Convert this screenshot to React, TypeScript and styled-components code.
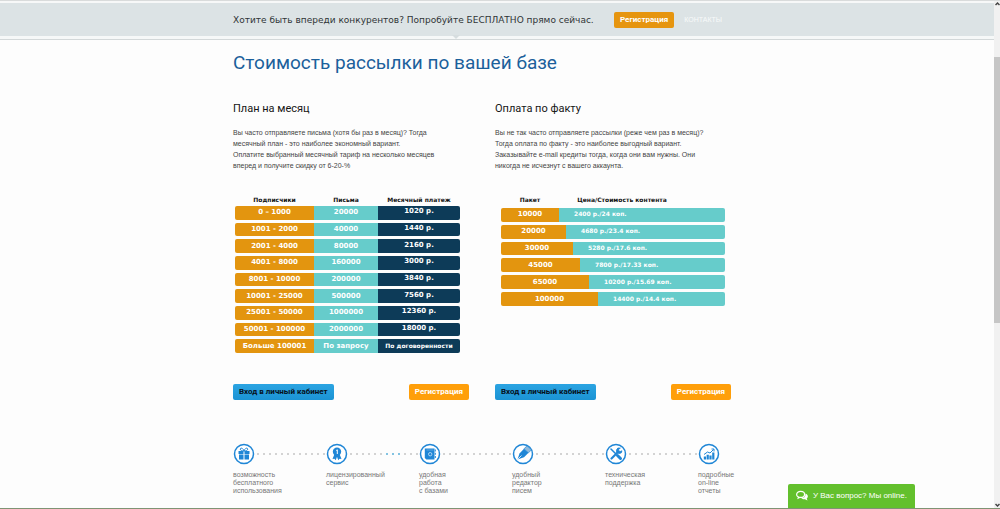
import React from "react";
import styled, { createGlobalStyle } from "styled-components";

const Global = createGlobalStyle`
  * { box-sizing: border-box; }
  html, body, #root { height: 100%; }
  body { margin: 0; background: #fdfdfd; font-family: "Liberation Sans", Arial, sans-serif; overflow: hidden; }
  h1, h2, p, ul { margin: 0; padding: 0; }
`;

const Shell = styled.div`
  display: flex;
  min-height: 100vh;
  border-top: 1px solid #d9dbdb;
  border-bottom: 1px solid #7f9474;
`;
const Page = styled.div`
  flex: 1;
  min-width: 0;
`;
const Container = styled.div`
  width: 100%;
  max-width: 528px;
  margin: 0 auto;
`;

const TopBar = styled.header`
  position: relative;
  border-top: 2px solid #f7f8f8;
  border-bottom: 1px solid #d3d8d9;
  background: #f6f8f8;
  padding-bottom: 3px;
`;
const TopBand = styled.div`
  background: #dce3e5;
`;
const TopRow = styled(Container)`
  display: flex;
  align-items: center;
  height: 33px;
  gap: 10px;
  white-space: nowrap;
`;
const Promo = styled.p`
  flex: 0 0 371px;
  font: 9px/12px "DejaVu Sans", Verdana, sans-serif;
  color: #2f3436;
`;
const NavLink = styled.a`
  font-size: 7px;
  line-height: 12px;
  color: #f8fafa;
  text-decoration: none;
`;
const Notch = styled.span`
  position: absolute;
  left: calc(50% - 45px);
  bottom: 0;
  border: 4px solid transparent;
  border-top-color: #d6dddf;
  border-bottom: 0;
`;

const Button = styled.button<{ $tone: "amber" | "orange" | "blue" }>`
  height: 16px;
  padding: 0 6px;
  border: 0;
  border-radius: 2px;
  font: 700 8px/16px Roboto, sans-serif;
  white-space: nowrap;
  color: ${(p) => (p.$tone === "blue" ? "#06121c" : "#fff")};
  background: ${(p) =>
    p.$tone === "amber" ? "#e6950f" : p.$tone === "orange" ? "#ff9f0a" : "linear-gradient(#2ba4e2, #1b93d4)"};
`;

const Title = styled.h1`
  padding-top: 11px;
  font: 400 19px/24px Roboto, sans-serif;
  color: #1b609b;
`;
const Plans = styled.div`
  display: flex;
  gap: 26px;
  margin-top: 26px;
`;
const Plan = styled.section`
  width: 236px;
  display: flex;
  flex-direction: column;
`;
const PlanTitle = styled.h2`
  font: 400 11px/16px Roboto, sans-serif;
  color: #151515;
`;
const Intro = styled.p`
  margin-top: 10px;
  font-size: 7px;
  line-height: 11px;
  color: #444;
  white-space: nowrap;
`;
const TableBox = styled.div`
  height: 189px;
  margin-top: 24px;
  font-family: "DejaVu Sans", Verdana, sans-serif;
`;
const Table = styled.table<{ $left: number; $right: number }>`
  display: block;
  margin: 0 ${(p) => p.$right}px 0 ${(p) => p.$left}px;
  font-size: 7px;
  line-height: 10px;
  font-weight: 700;
`;
const Head = styled.thead<{ $gap: number }>`
  display: block;
  padding-bottom: ${(p) => p.$gap}px;
`;
const Body = styled.tbody<{ $height: number }>`
  display: grid;
  grid-auto-rows: 1fr;
  gap: 3px;
  height: ${(p) => p.$height}px;
`;
const Row = styled.tr`
  display: flex;
  border-radius: 2px;
  overflow: hidden;
`;
const HeadCell = styled.th<{ $w: number }>`
  width: ${(p) => p.$w}px;
  padding: 0;
  font-size: 6px;
  color: #111;
  white-space: nowrap;
`;
const Cell = styled.td<{ $w?: number; $bg: string; $small?: boolean; $start?: boolean; $lift?: boolean }>`
  display: flex;
  align-items: center;
  justify-content: ${(p) => (p.$start ? "flex-start" : "center")};
  ${(p) => (p.$w ? `width: ${p.$w}px;` : "flex: 1;")}
  padding: 0 0 ${(p) => (p.$lift ? 3 : 1)}px ${(p) => (p.$start ? 15 : 0)}px;
  background: ${(p) => p.$bg};
  color: #fff;
  white-space: nowrap;
  ${(p) => p.$small && "font-size: 6px;"}
`;
const Actions = styled.div`
  display: flex;
  justify-content: space-between;
`;

const Features = styled.ul`
  display: flex;
  margin-top: 43px;
  list-style: none;
`;
const Feature = styled.li`
  width: 93px;
  flex: none;
  font-size: 7px;
  line-height: 8px;
  color: #777;
  white-space: pre-line;
`;
const Track = styled.div`
  display: flex;
  align-items: center;
  margin-bottom: 6px;
`;
const Circle = styled.svg`
  display: block;
  flex: none;
  width: 22px;
  height: 22px;
`;
const Dots = styled.svg`
  display: block;
  width: 71px;
  height: 2px;
`;

const Scroll = styled.div`
  display: flex;
  flex-direction: column;
  align-items: center;
  width: 6px;
  background: #f1f1f1;
`;
const Thumb = styled.div`
  width: 6px;
  height: 266px;
  margin: 51px 0 auto;
  background: #c6c6c6;
`;
const Arrow = styled.svg`
  display: block;
  width: 5px;
  height: 5px;
`;

const Chat = styled.button`
  position: fixed;
  right: 85px;
  bottom: 1px;
  display: flex;
  align-items: center;
  gap: 5px;
  width: 127px;
  height: 24px;
  padding: 0 8px;
  border: 0;
  border-radius: 2px 2px 0 0;
  background: #63c02d;
  color: #fff;
  font: 8px/12px "Liberation Sans", Arial, sans-serif;
  white-space: nowrap;
`;

const ORANGE = "#e3950f";
const TEAL = "#66cccb";
const NAVY = "#0d3b58";

const monthly = [
  ["0 – 1000", "20000", "1020 р."],
  ["1001 - 2000", "40000", "1440 р."],
  ["2001 - 4000", "80000", "2160 р."],
  ["4001 - 8000", "160000", "3000 р."],
  ["8001 - 10000", "200000", "3840 р."],
  ["10001 - 25000", "500000", "7560 р."],
  ["25001 - 50000", "1000000", "12360 р."],
  ["50001 - 100000", "2000000", "18000 р."],
  ["Больше 100001", "По запросу", "По договоренности"],
];

const packs: [string, string, number][] = [
  ["10000", "2400 р./24 коп.", 58],
  ["20000", "4680 р./23.4 коп.", 65],
  ["30000", "5280 р./17.6 коп.", 72],
  ["45000", "7800 р./17.33 коп.", 79],
  ["65000", "10200 р./15.69 коп.", 88],
  ["100000", "14400 р./14.4 коп.", 97],
];

const BLUE = "#1f86d6";
const icons = {
  gift: (
    <g fill={BLUE}>
      <path d="M5.500 8h5v3h-5zM11.500 8h5v3h-5zM6 11.500h4.500v5H6zM11.500 11.500H16v5h-4.500z" />
      <path d="M11 8C9 8 7.300 7.400 7.300 6.200 7.300 4.500 10 4.700 11 8zM11 8c2 0 3.700-.6 3.700-1.800C14.700 4.500 12 4.700 11 8z" fill="none" stroke={BLUE} />
    </g>
  ),
  medal: (
    <g>
      <path d="M8.500 11 6.500 16l2-.3 1.200 1.500L11.300 13h-.6l1.600 4.200 1.200-1.500 2 .3-2-5z" fill={BLUE} />
      <circle cx="11" cy="8.800" r="4.200" fill={BLUE} />
      <path d="M10.200 7.500 11.300 6.800V11" stroke="#fff" fill="none" />
    </g>
  ),
  book: (
    <g>
      <path d="M5.800 5.500h9.700V16.500H7.300L5.800 15z" fill={BLUE} />
      <path d="M16.300 6.500v2M16.300 9.800v2M16.300 13v2" stroke={BLUE} />
      <circle cx="11.200" cy="11.200" r="1.700" fill="none" stroke="#b9daf4" strokeWidth=".9" />
      <path d="M7.500 7h7" stroke="#6db0e6" strokeWidth=".8" />
    </g>
  ),
  pencil: (
    <g>
      <path d="m5.500 16.500 2-6L12 5.800l4.500 4-4.500 4.500z" fill={BLUE} />
      <path d="m12 5.800 3-3 4.500 4-3 3z" fill="#8fb9dc" stroke={BLUE} strokeWidth=".7" />
      <path d="m5.500 16.500 4-4" stroke="#fff" strokeWidth=".8" />
    </g>
  ),
  tools: (
    <g stroke={BLUE} fill="none" strokeLinecap="round">
      <path d="m6 6 5 5" strokeWidth="1.500" />
      <path d="m12.500 12.500 3 3" strokeWidth="3" />
      <path d="m6.500 15.500 6.500-6.500" strokeWidth="2.200" />
      <path d="M15 5a2.800 2.800 0 1 0 2 2.800l-2 .8L13.400 7z" fill={BLUE} strokeWidth=".8" />
    </g>
  ),
  chart: (
    <g fill={BLUE}>
      <path d="M5.800 13.500h2.200v3H5.800zM8.600 11.700h2.200v4.800H8.600zM11.400 12.500h2.200v4h-2.200zM14.200 9.500h2.200v7h-2.200z" />
      <path d="m6 11.500 3.500-2.500 2.500 1L15.500 6.500M13.500 6h2.500v2.500" fill="none" stroke={BLUE} />
    </g>
  ),
};

const features: { icon: keyof typeof icons; text: string; live?: boolean }[] = [
  { icon: "gift", text: "возможность\nбесплатного\nиспользования" },
  { icon: "medal", text: "лицензированный\nсервис", live: true },
  { icon: "book", text: "удобная\nработа\nс базами" },
  { icon: "pencil", text: "удобный\nредактор\nписем" },
  { icon: "tools", text: "техническая\nподдержка" },
  { icon: "chart", text: "подробные\non-line\nотчеты" },
];

function DotLine({ live }: { live?: boolean }) {
  return (
    <Dots viewBox="0 0 71 2" aria-hidden="true">
      {Array.from({ length: 12 }, (_, i) => (
        <rect key={i} x={2 + i * 6} y="0" width="2" height="2" rx=".7" fill={live && i > 5 && i < 9 ? "#6db9dd" : "#cbcbcb"} />
      ))}
    </Dots>
  );
}

function PlanActions() {
  return (
    <Actions>
      <Button $tone="blue">Вход в личный кабинет</Button>
      <Button $tone="orange">Регистрация</Button>
    </Actions>
  );
}

export default function App() {
  return (
    <Shell>
      <Global />
      <Page>
        <TopBar>
          <TopBand>
            <TopRow>
              <Promo>Хотите быть впереди конкурентов? Попробуйте БЕСПЛАТНО прямо сейчас.</Promo>
              <Button $tone="amber">Регистрация</Button>
              <NavLink href="#contacts">КОНТАКТЫ</NavLink>
            </TopRow>
          </TopBand>
          <Notch />
        </TopBar>
        <Container as="main">
          <Title>Стоимость рассылки по вашей базе</Title>
          <Plans>
            <Plan>
              <PlanTitle>План на месяц</PlanTitle>
              <Intro>
                Вы часто отправляете письма (хотя бы раз в месяц)? Тогда<br />
                месячный план - это наиболее экономный вариант.<br />
                Оплатите выбранный месячный тариф на несколько месяцев<br />
                вперед и получите скидку от 6-20-%
              </Intro>
              <TableBox>
                <Table $left={2} $right={9}>
                  <Head $gap={1}>
                    <Row>
                      <HeadCell $w={79}>Подписчики</HeadCell>
                      <HeadCell $w={64}>Письма</HeadCell>
                      <HeadCell $w={82}>Месячный платеж</HeadCell>
                    </Row>
                  </Head>
                  <Body $height={147}>
                    {monthly.map(([subs, mails, fee]) => (
                      <Row key={subs}>
                        <Cell $w={79} $bg={ORANGE}>{subs}</Cell>
                        <Cell $w={64} $bg={TEAL}>{mails}</Cell>
                        <Cell $bg={NAVY} $small={fee.length > 10} $lift={fee.length < 10}>{fee}</Cell>
                      </Row>
                    ))}
                  </Body>
                </Table>
              </TableBox>
              <PlanActions />
            </Plan>
            <Plan>
              <PlanTitle>Оплата по факту</PlanTitle>
              <Intro>
                Вы не так часто отправляете рассылки (реже чем раз в месяц)?<br />
                Тогда оплата по факту - это наиболее выгодный вариант.<br />
                Заказывайте e-mail кредиты тогда, когда они вам нужны. Они<br />
                никогда не исчезнут с вашего аккаунта.
              </Intro>
              <TableBox>
                <Table $left={6} $right={6}>
                  <Head $gap={3}>
                    <Row>
                      <HeadCell $w={58}>Пакет</HeadCell>
                      <HeadCell $w={126}>Цена/Стоимость контента</HeadCell>
                    </Row>
                  </Head>
                  <Body $height={98}>
                    {packs.map(([count, price, width]) => (
                      <Row key={count}>
                        <Cell $w={width} $bg={ORANGE}>{count}</Cell>
                        <Cell $bg={TEAL} $start $small>{price}</Cell>
                      </Row>
                    ))}
                  </Body>
                </Table>
              </TableBox>
              <PlanActions />
            </Plan>
          </Plans>
          <Features>
            {features.map((f, i) => (
              <Feature key={f.icon}>
                <Track>
                  <Circle viewBox="0 0 22 22" aria-hidden="true">
                    <circle cx="11" cy="11" r="9.500" fill="#fff" stroke={BLUE} strokeWidth="1.500" />
                    {icons[f.icon]}
                  </Circle>
                  {i < features.length - 1 && <DotLine live={f.live} />}
                </Track>
                {f.text}
              </Feature>
            ))}
          </Features>
        </Container>
      </Page>
      <Scroll>
        <Arrow viewBox="0 0 5 5"><path d="M.5 4 2.500 2l2 2" fill="none" stroke="#444" strokeWidth="1.500" /></Arrow>
        <Thumb />
        <Arrow viewBox="0 0 5 5"><path d="m.5 1 2 2 2-2" fill="none" stroke="#444" strokeWidth="1.500" /></Arrow>
      </Scroll>
      <Chat>
        <svg width="13" height="12" viewBox="0 0 13 12" aria-hidden="true">
          <path d="M10 3.200c3.600 1.200 3.400 4.300 1.700 5.400l.8 2.200-2.700-1.300c-2 .2-3.300-.3-4-1.100C9.300 8.500 10.800 6 10 3.200z" fill="#fff" />
          <ellipse cx="5" cy="4.300" rx="4.300" ry="3.300" fill="none" stroke="#fff" strokeWidth="1.300" />
          <path d="M2.300 6.500 1.300 9.500l3.500-1.700z" fill="#fff" />
        </svg>
        У Вас вопрос? Мы online.
      </Chat>
    </Shell>
  );
}
